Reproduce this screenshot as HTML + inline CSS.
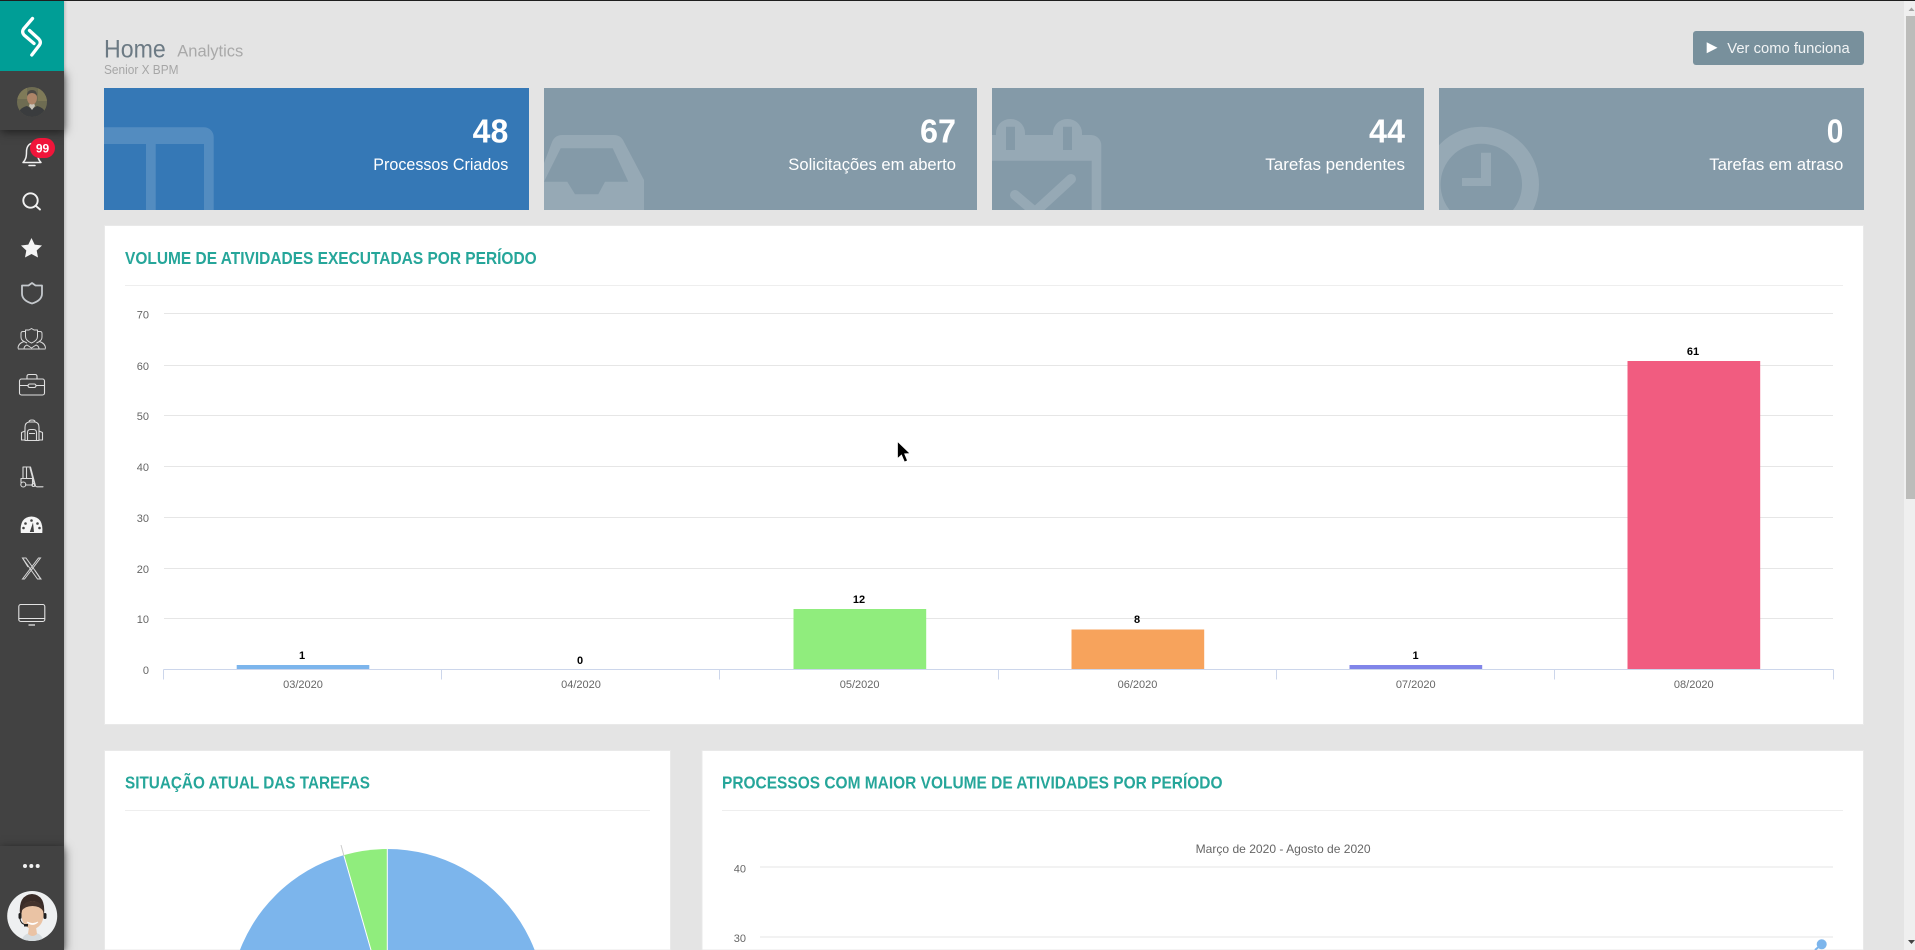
<!DOCTYPE html>
<html lang="pt"><head><meta charset="utf-8"><title>Home Analytics</title>
<style>
html,body{margin:0;padding:0;width:1915px;height:950px;overflow:hidden;background:#e4e4e4;font-family:"Liberation Sans",sans-serif}
svg{position:absolute;left:0;top:0}
.side{position:absolute;left:0;top:0;width:64px;height:950px;background:#424242;box-shadow:1px 0 3px rgba(0,0,0,.2)}
.blk{position:absolute;left:0;width:64px;background:#424242;box-shadow:1px 2px 9px rgba(0,0,0,.55)}
text{font-family:"Liberation Sans",sans-serif}
</style></head><body>
<svg width="1915" height="950" viewBox="0 0 1915 950">
<!-- header -->
<text x="104" y="57.5" font-size="25" fill="#6c7a84" textLength="61.7" lengthAdjust="spacingAndGlyphs">Home</text>
<text x="177.3" y="56.7" font-size="17" fill="#a9a9a9" textLength="66" lengthAdjust="spacingAndGlyphs">Analytics</text>
<text x="104" y="74" font-size="13" fill="#a6a6a6" textLength="74.5" lengthAdjust="spacingAndGlyphs">Senior X BPM</text>
<rect x="1693" y="31" width="171" height="34" rx="3" fill="#78909c"/>
<path d="M1706.7 42.3L1717.5 47.8L1706.7 53.3Z" fill="#fff"/>
<text x="1727.3" y="53" font-size="15" fill="#f2f4f5" textLength="122.4" lengthAdjust="spacingAndGlyphs">Ver como funciona</text>

<!-- cards -->
<defs>
<clipPath id="c1"><rect x="104" y="88" width="425" height="122"/></clipPath>
<clipPath id="c2"><rect x="544" y="88" width="433" height="122"/></clipPath>
<clipPath id="c3"><rect x="992" y="88" width="432" height="122"/></clipPath>
<clipPath id="c4"><rect x="1439" y="88" width="425" height="122"/></clipPath>
<clipPath id="vp"><rect x="0" y="0" width="1915" height="950"/></clipPath>
</defs>
<rect x="104" y="88" width="425" height="122" fill="#3578b6"/>
<rect x="544" y="88" width="433" height="122" fill="#849aa8"/>
<rect x="992" y="88" width="432" height="122" fill="#849aa8"/>
<rect x="1439" y="88" width="425" height="122" fill="#849aa8"/>

<g clip-path="url(#c1)" fill="#fff" fill-opacity=".15">
<path fill-rule="evenodd" d="M90 127.3H204a9.7 9.7 0 0 1 9.7 9.7V215H90ZM90 144V215H146V144ZM155.700 144V215H204V144Z"/>
</g>
<g clip-path="url(#c2)" fill="#fff" fill-opacity=".15">
<path fill-rule="evenodd" d="M530 200L552 142Q555 135 562 135H614Q621 135 624 142L644 180V215H530ZM560.700 148.300L544 181.700H567.300L575 194.300H598.300L605 181.700H628.300L612.700 148.300Z"/>
</g>
<g clip-path="url(#c3)" fill="#fff" fill-opacity=".15">
<path fill-rule="evenodd" d="M985 135H996V133A14 14 0 0 1 1010 119H1011A14 14 0 0 1 1025 133V135H1053V133A14 14 0 0 1 1067 119H1068A14 14 0 0 1 1082 133V135H1091A10.300 10.300 0 0 1 1101.300 145.300V215H1091.700V160.700H985ZM1006 126.700V150H1015V126.700ZM1063 126.700V150H1072V126.700Z"/>
<path d="M1015 195L1035 212L1071 179" fill="none" stroke="#fff" stroke-opacity=".15" stroke-width="10" stroke-linecap="round" stroke-linejoin="round"/>
</g>
<g clip-path="url(#c4)">
<circle cx="1481.300" cy="184.400" r="49.200" fill="none" stroke="#fff" stroke-opacity=".15" stroke-width="17"/>
<path d="M1481 152.700h10V186h-29v-8h19Z" fill="#fff" fill-opacity=".15"/>
</g>

<g fill="#fff" font-weight="bold" font-size="33">
<text x="472.600" y="142.500" textLength="35.700" lengthAdjust="spacingAndGlyphs">48</text>
<text x="920" y="142.500" textLength="36" lengthAdjust="spacingAndGlyphs">67</text>
<text x="1369" y="142.500" textLength="36" lengthAdjust="spacingAndGlyphs">44</text>
<text x="1826.700" y="142.500" textLength="16.600" lengthAdjust="spacingAndGlyphs">0</text>
</g>
<g fill="#fff" font-size="17">
<text x="373.300" y="170" textLength="135" lengthAdjust="spacingAndGlyphs">Processos Criados</text>
<text x="788.300" y="170" textLength="167.700" lengthAdjust="spacingAndGlyphs">Solicitações em aberto</text>
<text x="1265.300" y="170" textLength="139.700" lengthAdjust="spacingAndGlyphs">Tarefas pendentes</text>
<text x="1709.300" y="170" textLength="134" lengthAdjust="spacingAndGlyphs">Tarefas em atraso</text>
</g>

<!-- panel 1 -->
<rect x="104.500" y="225.500" width="1759" height="499" fill="#fff" stroke="#e9e9e9"/>
<text x="125" y="264" font-size="17.500" font-weight="bold" fill="#26a69a" textLength="411.700" lengthAdjust="spacingAndGlyphs">VOLUME DE ATIVIDADES EXECUTADAS POR PERÍODO</text>
<path d="M125 285.500H1843" stroke="#eee" stroke-width="1"/>
<g stroke="#e6e6e6" stroke-width="1">
<path d="M164 313.500H1833M164 365.500H1833M164 415.500H1833M164 466.500H1833M164 517.500H1833M164 568.500H1833M164 618.500H1833"/>
</g>
<g fill="#666" font-size="11" text-anchor="end">
<text x="149" y="318.500">70</text><text x="149" y="370">60</text><text x="149" y="420">50</text>
<text x="149" y="471">40</text><text x="149" y="522">30</text><text x="149" y="573">20</text>
<text x="149" y="623">10</text><text x="149" y="674">0</text>
</g>
<rect x="236.700" y="665" width="132.600" height="4" fill="#7cb5ec"/>
<rect x="793.500" y="609" width="132.700" height="60" fill="#90ed7d"/>
<rect x="1071.500" y="629.500" width="132.700" height="39.500" fill="#f7a35c"/>
<rect x="1349.500" y="665" width="132.700" height="4" fill="#8085e9"/>
<rect x="1627.500" y="361" width="132.700" height="308" fill="#f15c80"/>
<path d="M163.500 669.500H1833.500M163.500 669.500V679.500M441.500 669.500V679.500M719.500 669.500V679.500M998.500 669.500V679.500M1276.500 669.500V679.500M1554.500 669.500V679.500M1833.500 669.500V679.500" stroke="#ccd6eb" stroke-width="1" fill="none"/>
<g fill="#666" font-size="11" text-anchor="middle">
<text x="303" y="688">03/2020</text><text x="581" y="688">04/2020</text><text x="859.600" y="688">05/2020</text>
<text x="1137.500" y="688">06/2020</text><text x="1415.700" y="688">07/2020</text><text x="1693.800" y="688">08/2020</text>
</g>
<g fill="#000" font-size="11" font-weight="bold" text-anchor="middle">
<text x="302" y="659">1</text><text x="580" y="664">0</text><text x="859" y="603">12</text>
<text x="1137" y="623">8</text><text x="1415.500" y="659">1</text><text x="1693" y="355">61</text>
</g>

<!-- bottom panels -->
<rect x="104.500" y="750.500" width="566" height="199.500" fill="#fff" stroke="#e9e9e9"/>
<rect x="702" y="750.500" width="1161.500" height="199.500" fill="#fff" stroke="#e9e9e9"/>
<text x="125" y="788.500" font-size="17.500" font-weight="bold" fill="#26a69a" textLength="245" lengthAdjust="spacingAndGlyphs">SITUAÇÃO ATUAL DAS TAREFAS</text>
<text x="722" y="788.500" font-size="17.500" font-weight="bold" fill="#26a69a" textLength="500.500" lengthAdjust="spacingAndGlyphs">PROCESSOS COM MAIOR VOLUME DE ATIVIDADES POR PERÍODO</text>
<path d="M125 810.500H650M722 810.500H1843" stroke="#eee" stroke-width="1"/>
<g clip-path="url(#vp)">
<path d="M387.300 849A158 158 0 1 1 343.800 855.100L387.300 1007Z" fill="#7cb5ec"/>
<path d="M387.300 1007L343.800 855.100A158 158 0 0 1 387.300 849Z" fill="#90ed7d"/>
<path d="M387.300 1007L343.800 855.100M387.300 1007V849" stroke="#fff" stroke-width="1" fill="none"/>
</g>
<path d="M341 845L344 856" stroke="#ccc" stroke-width="1" fill="none"/>

<text x="1195.600" y="853" font-size="12" fill="#666" textLength="175" lengthAdjust="spacingAndGlyphs">Março de 2020 - Agosto de 2020</text>
<path d="M760 867.500H1833M760 937.500H1833" stroke="#e6e6e6" stroke-width="1" transform="translate(0,-.5)"/>
<g fill="#666" font-size="11" text-anchor="end"><text x="746" y="872.500">40</text><text x="746" y="942">30</text></g>
<path d="M1821.700 944.300L1815 950" stroke="#7cb5ec" stroke-width="2"/>
<path d="M1816.700 944.300a5 5 0 0 1 10 0a5 5 0 0 1 -10 0Z" fill="#7cb5ec"/>

<!-- cursor -->
<path d="M897.500 441.500V458.500L901.500 455L904.500 462L907.500 460.700L904.600 453.800L910 453.500Z" fill="#000" stroke="#fff" stroke-width=".7"/>

<!-- scrollbar -->
<rect x="1904" y="0" width="11" height="950" fill="#efefef"/>
<rect x="1906" y="16" width="9" height="483" fill="#bcbcba"/>
<path d="M1908.500 11L1911.500 7.500L1914.500 11Z" fill="#a3a3a3"/>
<path d="M1908 940L1915 940L1911.500 944Z" fill="#444"/>
</svg>

<div class="side"></div>
<div class="blk" style="top:71px;height:59px"></div>
<div class="blk" style="top:846px;height:104px"></div>
<div style="position:absolute;left:0;top:1px;width:64px;height:70px;background:#009e96"></div>
<div style="position:absolute;left:0;top:0;width:1915px;height:1px;background:#1e1e1e"></div>

<svg width="64" height="950" viewBox="0 0 64 950" style="width:64px">
<!-- logo -->
<path d="M32.500 18.500L23.500 29Q21.500 32 24 35L34 43.500M29.500 30.500L38.800 39Q41.500 42 39.500 45L31.800 55" fill="none" stroke="#fff" stroke-width="3.300" stroke-linecap="round" stroke-linejoin="round"/>
<!-- top avatar -->
<defs><clipPath id="a1"><circle cx="32" cy="102" r="15"/></clipPath><clipPath id="a2"><circle cx="32.200" cy="916" r="25"/></clipPath></defs>
<g clip-path="url(#a1)">
<rect x="17" y="87" width="30" height="30" fill="#6e6c52"/>
<path d="M17 87h10v12H17zM38 87h9v14h-9z" fill="#7f7a58"/>
<path d="M18 117q0-9 9-11l5 3 5-3q9 2 9 11z" fill="#3a3c3e"/>
<path d="M29 106l3 4 3-4-1-3h-4z" fill="#c9c4bb"/>
<ellipse cx="32" cy="98" rx="5" ry="6.500" fill="#ad8468"/>
<path d="M27 96q0-6 5-6t5 6q-2-3-5-3t-5 3z" fill="#4a4844"/>
</g>
<!-- bell -->
<path d="M23 162.500c3-3 3.500-6 3.500-11c0-4.500 2.500-8 5.500-8s5.500 3.500 5.500 8c0 5 .5 8 3.500 11ZM29 165.500h6" fill="none" stroke="#f0f0f0" stroke-width="1.500" stroke-linejoin="round" stroke-linecap="round"/>
<rect x="30" y="138" width="25" height="20" rx="10" fill="#f0153a"/>
<text x="42.500" y="152.500" font-size="12" font-weight="bold" fill="#fff" text-anchor="middle">99</text>
<!-- search -->
<circle cx="30.500" cy="200.500" r="7.200" fill="none" stroke="#f2f2f2" stroke-width="1.900"/>
<path d="M35.800 205.800L40 209.500" stroke="#f2f2f2" stroke-width="1.900" stroke-linecap="round"/>
<!-- star -->
<path d="M31.500 238L34.700 244.600L42 245.500L36.700 250.500L38 257.500L31.500 254L25 257.500L26.300 250.500L21 245.500L28.300 244.600Z" fill="#f5f5f5"/>
<!-- shield -->
<path d="M32 283l3.500 2.500h6.500v8q0 7-10 10q-10-3-10-10v-8h6.500Z" fill="none" stroke="#c4c8cc" stroke-width="1.800" stroke-linejoin="round"/>
<!-- team -->
<g fill="none" stroke="#d8d8d8" stroke-width="1" stroke-linejoin="round">
<path d="M31.500 328.500l2.500 1.500h3.500v6.500q0 4-6 6.500q-6-2.500-6-6.500v-6.500h3.500Z"/>
<path d="M25.500 331.500h-2.500q-2 0-2 2v3.500q0 3 3 4.500M37.500 331.500h2.500q2 0 2 2v3.500q0 3-3 4.500"/>
<path d="M18 348.500q0-5 6-7l3 1.500M45.500 348.500q0-5-6-7l-3 1.500M24 349q0-3 3-4l4.500 3l4.500-3q3 1 3 4M18 349h27.500"/>
</g>
<!-- briefcase -->
<g fill="none" stroke="#e0e0e0" stroke-width="1.100" stroke-linejoin="round">
<rect x="19.500" y="379" width="25" height="16" rx="2"/>
<path d="M27 379v-2.500q0-2 2-2h6q2 0 2 2v2.500M19.500 385.500h8.500M36 385.500h8.500"/>
<rect x="28" y="384" width="8" height="3.500" rx="1.700"/>
</g>
<!-- backpack -->
<g fill="none" stroke="#dcdcdc" stroke-width="1.100" stroke-linejoin="round">
<path d="M25 440.500v-13q0-5 4-5.500h6q4 .5 4 5.500v13Z"/>
<path d="M27.500 440.500v-8q0-3 3-3h3q3 0 3 3v8M29 433.500h6M25 431l-3.500 1.500v7.500h3.500M39 431l3.500 1.500v7.500h-3.500"/>
<path d="M29 422q0-2 3-2t3 2"/>
</g>
<!-- forklift -->
<g fill="none" stroke="#dcdcdc" stroke-width="1.100" stroke-linejoin="round" stroke-linecap="round">
<path d="M23 478v-11h7.500l5 19q.5 .8 1.500 .8h6"/>
<path d="M26.500 467v11M30 468l4.500 17"/>
<path d="M21 478.500h11.500v6.500h-7M21 478.500v4"/>
<circle cx="23.300" cy="484.500" r="2.500"/><circle cx="33.500" cy="485" r="1.500"/>
</g>
<!-- gauge -->
<path d="M20.800 533q-1.500-16 10.700-16.500q12.200.5 10.800 16.500Z" fill="#f5f5f5"/>
<g fill="#424242"><circle cx="31.500" cy="520.500" r="1.300"/><circle cx="25.500" cy="523.500" r="1.300"/><circle cx="37.500" cy="523.500" r="1.300"/><circle cx="23.500" cy="528" r="1.300"/><circle cx="39.500" cy="528" r="1.300"/>
<path d="M33 522.500L34 532h-4.200Z"/></g>
<!-- X -->
<g fill="none" stroke="#d6d6d6" stroke-width="1">
<path d="M22.500 558h3.500l15 21h-3.500ZM40.500 558h-2l-16 21h2Z"/>
<path d="M28 567L22.500 558M35 570.500l5.500 8.500"/>
</g>
<!-- monitor -->
<g fill="none" stroke="#e2e2e2" stroke-width="1.100">
<rect x="18.800" y="604.500" width="26" height="17" rx="2"/>
<path d="M18.800 618.500h26"/>
<path d="M28.500 625h6.500" stroke-width="1.300"/>
</g>
<!-- dots -->
<circle cx="25" cy="866" r="2" fill="#f2f2f2"/><circle cx="31.300" cy="866" r="2" fill="#f2f2f2"/><circle cx="37.700" cy="866" r="2" fill="#f2f2f2"/>
<!-- bottom avatar -->
<g clip-path="url(#a2)">
<rect x="7" y="891" width="51" height="51" fill="#eef0f1"/>
<path d="M20 915q-2-20 12-21q14 1 12 21l-2-2q0-10-10-11q-10 1-10 11Z" fill="#3a2c27"/>
<ellipse cx="32.500" cy="915" rx="11" ry="14" fill="#eac3a4"/>
<path d="M21.500 911q1-10 11-10t10.500 10q-3-5-10.500-5t-11 5Z" fill="#44332c"/>
<path d="M27 922q5.500 3 11 0q-5.500 5-11 0Z" fill="#fff" stroke="#fff" stroke-width=".8"/>
<path d="M21 942q2-8 9-9l3 3 3-3q6 1 8 9Z" fill="#d5dbde"/>
<path d="M29 927l-1 7q4.500 4 9 0l-1-7Z" fill="#eac3a4"/>
<rect x="18.500" y="913" width="3" height="6" rx="1.500" fill="#1e1e1e"/><rect x="43.500" y="913" width="3" height="6" rx="1.500" fill="#1e1e1e"/>
<path d="M20 919q1 5 6 6" fill="none" stroke="#222" stroke-width="1"/><rect x="24" y="924" width="4" height="2.500" fill="#222"/>
</g>
</svg>
</body></html>
